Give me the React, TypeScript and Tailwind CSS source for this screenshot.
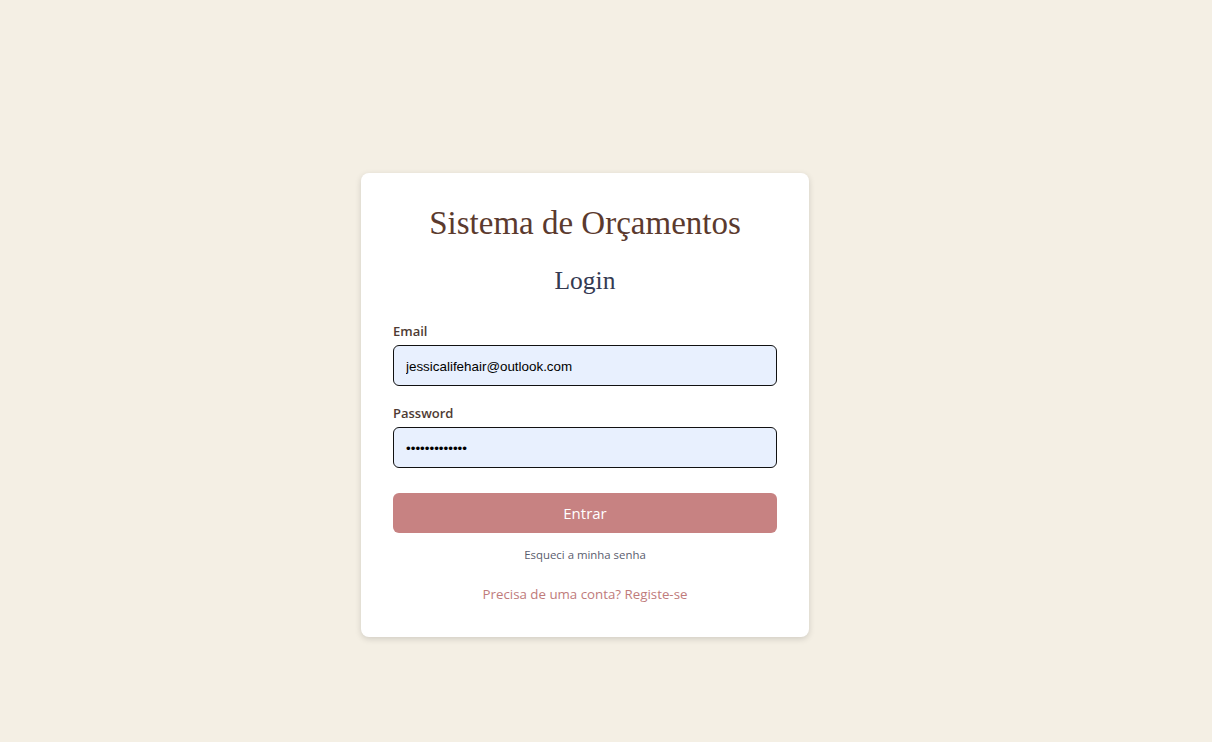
export default function App() {
  return (
    <div className="min-h-[742px] w-full bg-[#f4efe4] font-['Open_Sans',sans-serif]">
      <div className="flex w-[1170px] justify-center pt-[173px]">
        {/* Card */}
        <div className="w-[448px] rounded-lg bg-white px-8 pb-[33px] pt-8 shadow-[0_2px_6px_rgba(0,0,0,0.15)]">
          <h1 className="text-center font-['Liberation_Serif',serif] text-[33px] leading-9 text-[#5b3a2e]">
            Sistema de Orçamentos
          </h1>
          <h2 className="mt-6 text-center font-['Liberation_Serif',serif] text-[25.5px] leading-8 text-[#343a52]">
            Login
          </h2>

          <form className="mt-6" onSubmit={(e) => e.preventDefault()}>
            <label className="block text-[13px] font-semibold leading-5 text-[#4e3b34]">
              Email
            </label>
            <input
              type="email"
              defaultValue="jessicalifehair@outlook.com"
              className="mt-1 block h-[41px] w-full rounded-md border border-[#111] bg-[#e8f0fe] px-3 pt-0.5 font-['Liberation_Sans',sans-serif] text-[13.4px] text-black outline-none"
            />

            <label className="mt-[17px] block text-[13px] font-semibold leading-5 text-[#4e3b34]">
              Password
            </label>
            <input
              type="password"
              defaultValue="jessicahair12"
              className="mt-1 block h-[41px] w-full rounded-md border border-[#111] bg-[#e8f0fe] px-3 pt-0.5 font-['Liberation_Sans',sans-serif] text-[13.4px] text-black outline-none"
            />

            <button
              type="submit"
              className="mt-[25px] h-10 w-full rounded-md bg-[#c78282] text-[15px] text-white"
            >
              Entrar
            </button>
          </form>

          <p className="mt-[14px] text-center text-[11.4px] leading-4 text-[#5a5d6e]">
            Esqueci a minha senha
          </p>
          <p className="mt-[21px] text-center text-[13.3px] leading-5 text-[#c07b7b]">
            Precisa de uma conta? Registe-se
          </p>
        </div>
      </div>
    </div>
  );
}
